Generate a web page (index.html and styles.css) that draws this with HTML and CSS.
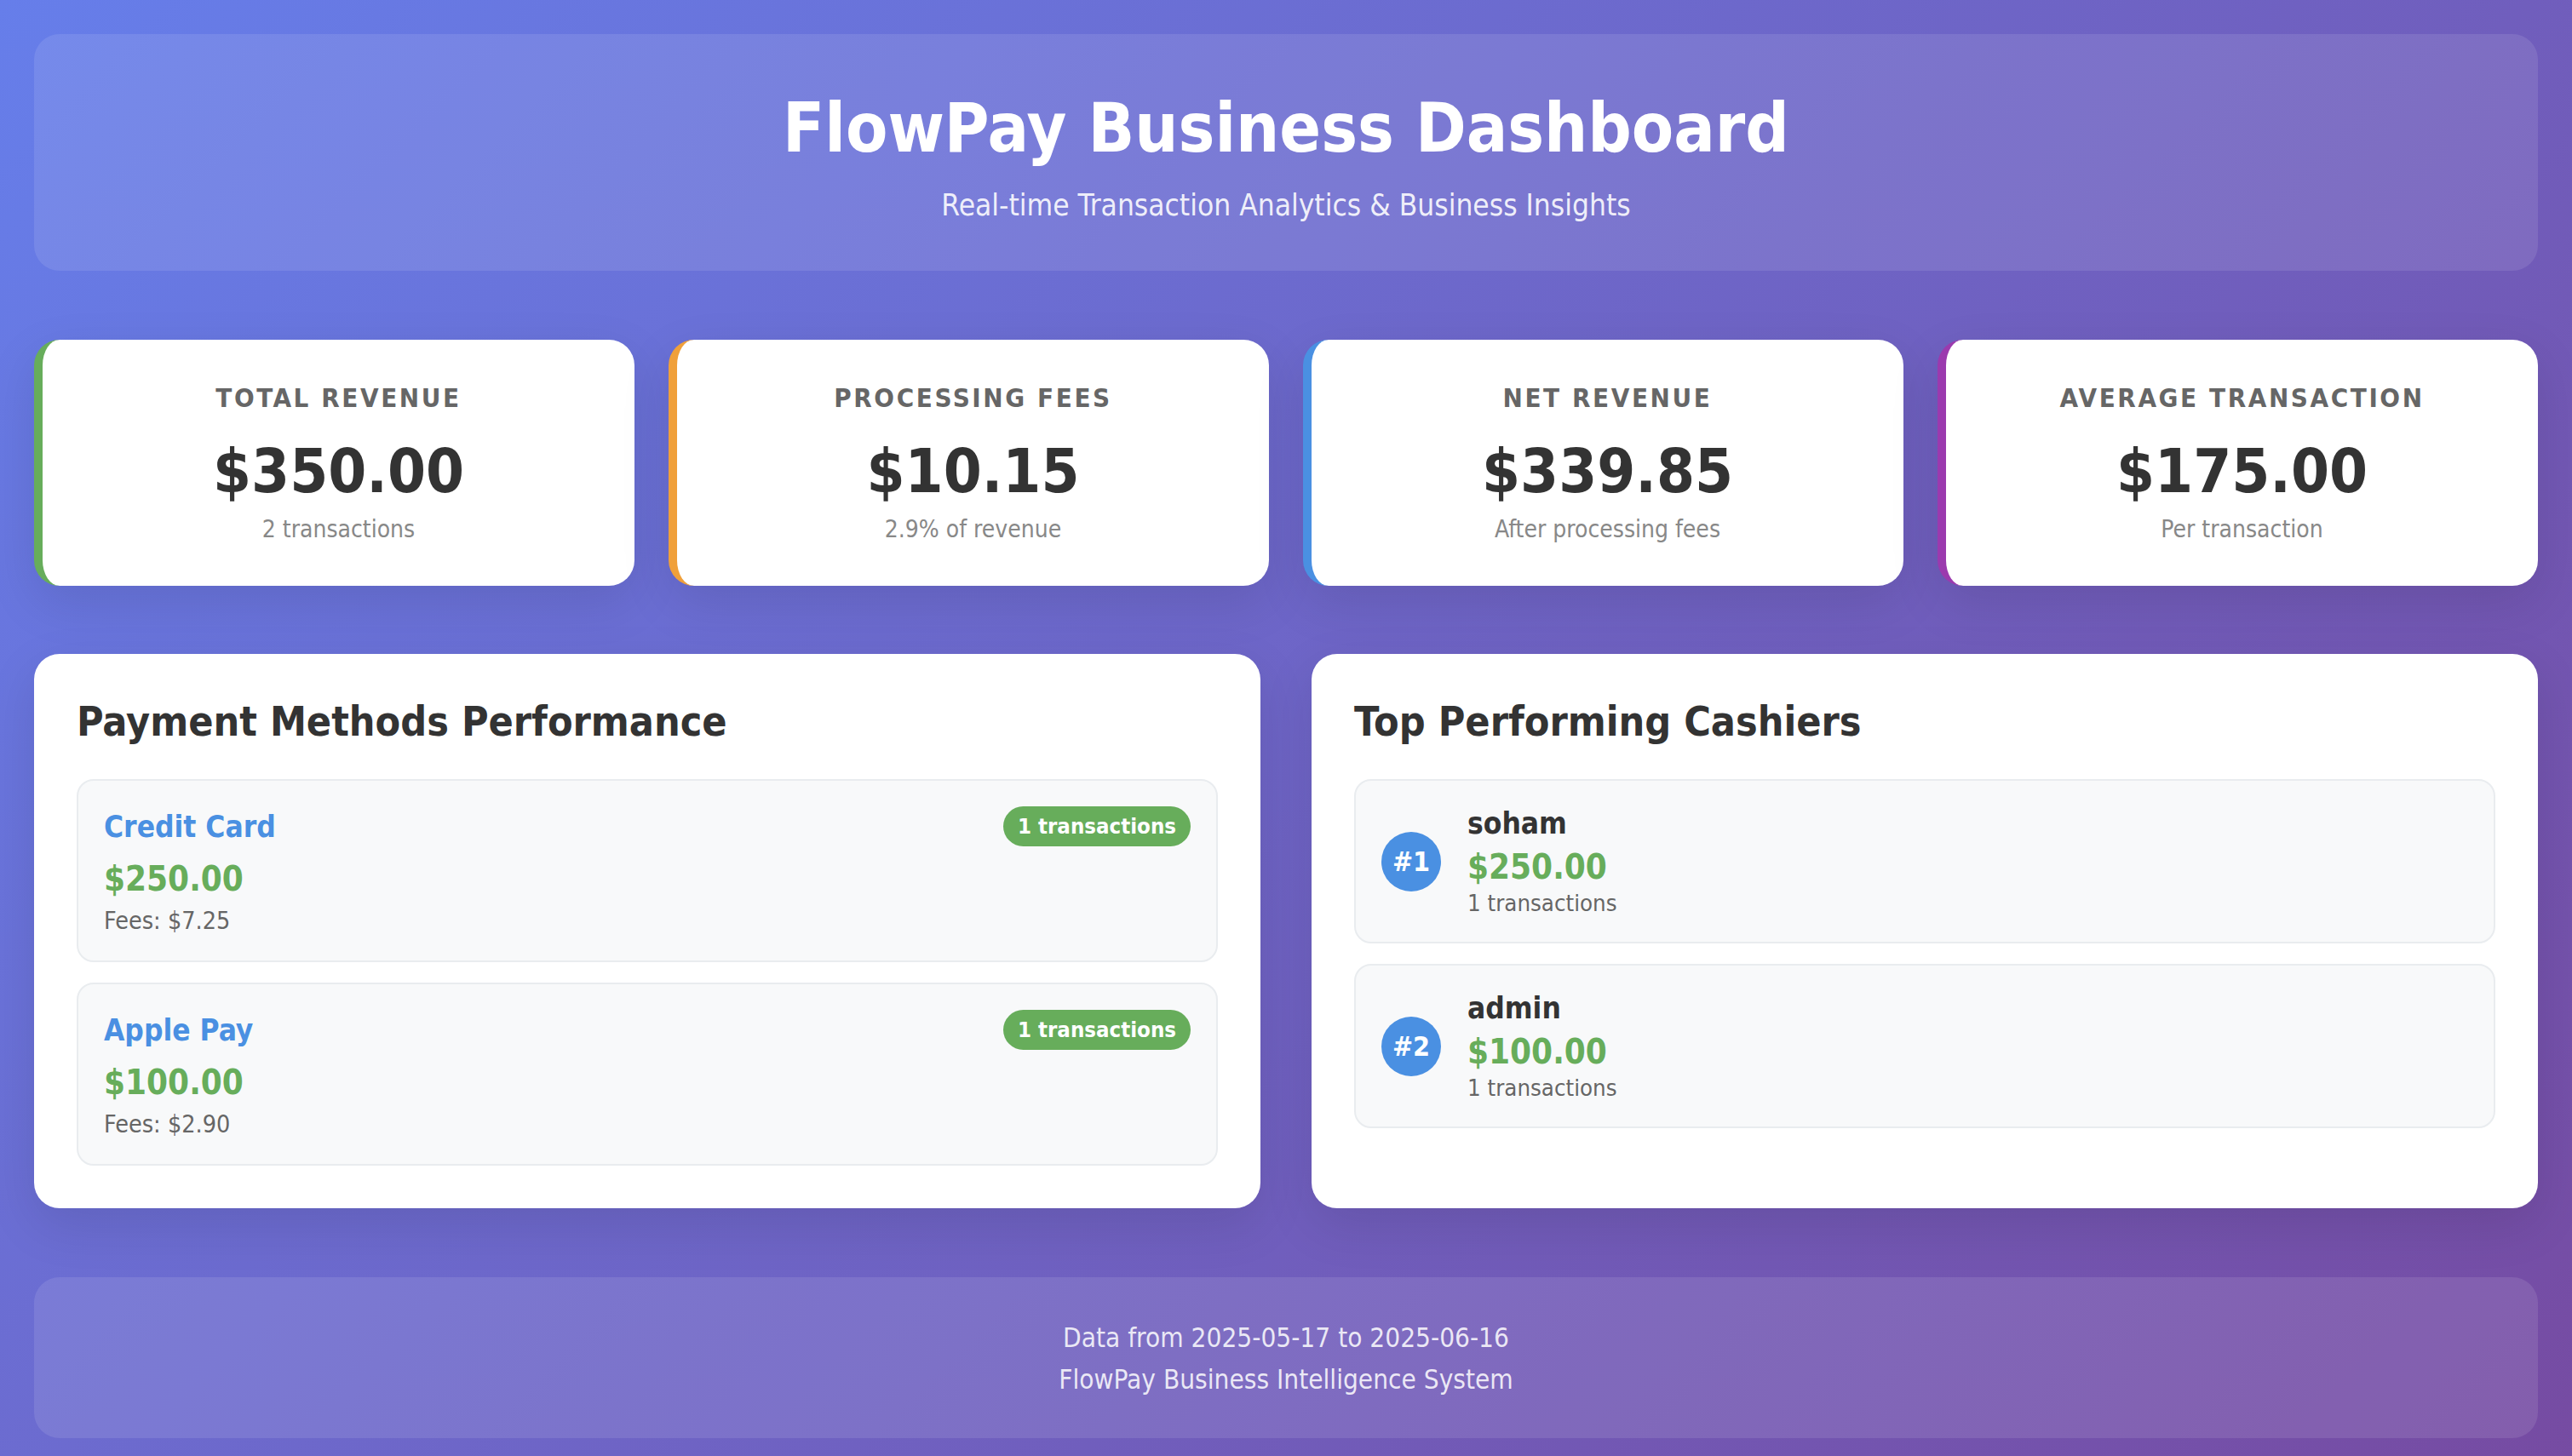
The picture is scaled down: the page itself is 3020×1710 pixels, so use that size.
FILE: index.html
```html
<!DOCTYPE html>
<html lang="en">
<head>
<meta charset="utf-8">
<title>FlowPay Business Dashboard</title>
<link rel="stylesheet" href="styles.css">
</head>
<body>
<div class="page">
  <header class="hero">
    <h1 class="hero-title">FlowPay Business Dashboard</h1>
    <p class="hero-sub">Real-time Transaction Analytics &amp; Business Insights</p>
  </header>

  <section class="stats">
    <div class="stat stat-green">
      <div class="stat-label">Total Revenue</div>
      <div class="stat-value">$350.00</div>
      <div class="stat-sub">2 transactions</div>
    </div>
    <div class="stat stat-orange">
      <div class="stat-label">Processing Fees</div>
      <div class="stat-value">$10.15</div>
      <div class="stat-sub">2.9% of revenue</div>
    </div>
    <div class="stat stat-blue">
      <div class="stat-label">Net Revenue</div>
      <div class="stat-value">$339.85</div>
      <div class="stat-sub">After processing fees</div>
    </div>
    <div class="stat stat-purple">
      <div class="stat-label">Average Transaction</div>
      <div class="stat-value">$175.00</div>
      <div class="stat-sub">Per transaction</div>
    </div>
  </section>

  <section class="panels">
    <div class="panel">
      <h2 class="panel-title">Payment Methods Performance</h2>
      <div class="item method">
        <div class="method-head">
          <span class="method-name">Credit Card</span>
          <span class="badge">1 transactions</span>
        </div>
        <div class="amount">$250.00</div>
        <div class="fees">Fees: $7.25</div>
      </div>
      <div class="item method">
        <div class="method-head">
          <span class="method-name">Apple Pay</span>
          <span class="badge">1 transactions</span>
        </div>
        <div class="amount">$100.00</div>
        <div class="fees">Fees: $2.90</div>
      </div>
    </div>

    <div class="panel">
      <h2 class="panel-title">Top Performing Cashiers</h2>
      <div class="item cashier">
        <div class="rank">#1</div>
        <div class="cashier-info">
          <div class="cashier-name">soham</div>
          <div class="amount cashier-amount">$250.00</div>
          <div class="cashier-count">1 transactions</div>
        </div>
      </div>
      <div class="item cashier">
        <div class="rank">#2</div>
        <div class="cashier-info">
          <div class="cashier-name">admin</div>
          <div class="amount cashier-amount">$100.00</div>
          <div class="cashier-count">1 transactions</div>
        </div>
      </div>
    </div>
  </section>

  <footer class="foot">
    <p class="foot-line">Data from 2025-05-17 to 2025-06-16</p>
    <p class="foot-line">FlowPay Business Intelligence System</p>
  </footer>
</div>
</body>
</html>
```

FILE: styles.css
```css
* {
  box-sizing: border-box;
  margin: 0;
  padding: 0;
}

html, body {
  min-height: 100%;
}

body {
  font-family: "DejaVu Sans Condensed", "DejaVu Sans", sans-serif;
  font-stretch: condensed;
  background: linear-gradient(135deg, #667eea 0%, #764ba2 100%);
  color: #333;
  padding: 40px;
  min-height: 1710px;
}

.page {
  width: 100%;
}

/* Header */
.hero {
  background: rgba(255, 255, 255, 0.1);
  border-radius: 30px;
  padding: 63px 40px 56px;
  text-align: center;
  margin-bottom: 81px;
}

.hero-title {
  font-size: 80px;
  line-height: 96px;
  font-weight: 700;
  color: #fff;
  margin-bottom: 21px;
}

.hero-sub {
  font-size: 35px;
  line-height: 42px;
  color: rgba(255, 255, 255, 0.9);
}

/* Stat cards */
.stats {
  display: grid;
  grid-template-columns: repeat(4, 1fr);
  gap: 40px;
  margin-bottom: 80px;
}

.stat {
  background: #fff;
  border-radius: 30px;
  border-left: 10px solid #67ad5b;
  padding: 50px 40px;
  text-align: center;
  box-shadow: 0 20px 60px rgba(0, 0, 0, 0.1);
}

.stat-green { border-left-color: #67ad5b; }
.stat-orange { border-left-color: #f0a03a; }
.stat-blue { border-left-color: #4a90e2; }
.stat-purple { border-left-color: #9b3aae; }

.stat-label {
  font-size: 31px;
  line-height: 37px;
  font-weight: 700;
  color: #666;
  text-transform: uppercase;
  letter-spacing: 2.6px;
  margin-bottom: 24px;
}

.stat-value {
  font-size: 72px;
  line-height: 86px;
  font-weight: 700;
  color: #333;
  margin-bottom: 10px;
}

.stat-sub {
  font-size: 28px;
  line-height: 32px;
  color: #888;
}

/* Panels */
.panels {
  display: grid;
  grid-template-columns: 1fr 1fr;
  gap: 60px;
  margin-bottom: 81px;
}

.panel {
  background: #fff;
  border-radius: 30px;
  padding: 50px;
  box-shadow: 0 20px 60px rgba(0, 0, 0, 0.1);
}

.panel-title {
  font-size: 48px;
  line-height: 58px;
  font-weight: 700;
  color: #333;
  margin-bottom: 39px;
}

.item {
  background: #f8f9fa;
  border: 2px solid #e9ecef;
  border-radius: 20px;
  padding: 30px;
  margin-bottom: 24px;
}

.item:last-child {
  margin-bottom: 0;
}

.method-head {
  display: flex;
  justify-content: space-between;
  align-items: center;
  margin-bottom: 14px;
}

.method-name {
  font-size: 35px;
  line-height: 44px;
  font-weight: 700;
  color: #4a90e2;
}

.badge {
  background: #67ad5b;
  color: #fff;
  font-size: 25.6px;
  line-height: 47px;
  height: 47px;
  padding: 0 17px;
  border-radius: 24px;
  font-weight: 700;
}

.amount {
  font-size: 40px;
  line-height: 48px;
  font-weight: 700;
  color: #67ad5b;
  margin-bottom: 9px;
}

.fees {
  font-size: 28.5px;
  line-height: 33px;
  color: #666;
}

/* Cashiers */
.cashier {
  display: flex;
  align-items: center;
  gap: 31px;
}

.rank {
  flex: 0 0 70px;
  width: 70px;
  height: 70px;
  border-radius: 50%;
  background: #4a90e2;
  color: #fff;
  font-weight: 700;
  font-size: 32px;
  display: flex;
  align-items: center;
  justify-content: center;
}

.cashier-name {
  font-size: 35px;
  line-height: 40px;
  font-weight: 700;
  color: #333;
  margin-bottom: 7px;
}

.cashier-amount {
  margin-bottom: 3px;
}

.cashier-count {
  font-size: 27.4px;
  line-height: 31px;
  color: #666;
}

/* Footer */
.foot {
  background: rgba(255, 255, 255, 0.1);
  border-radius: 30px;
  padding: 47px 40px 44px;
  text-align: center;
}

.foot-line {
  font-size: 31.3px;
  line-height: 49px;
  color: rgba(255, 255, 255, 0.85);
}
```
